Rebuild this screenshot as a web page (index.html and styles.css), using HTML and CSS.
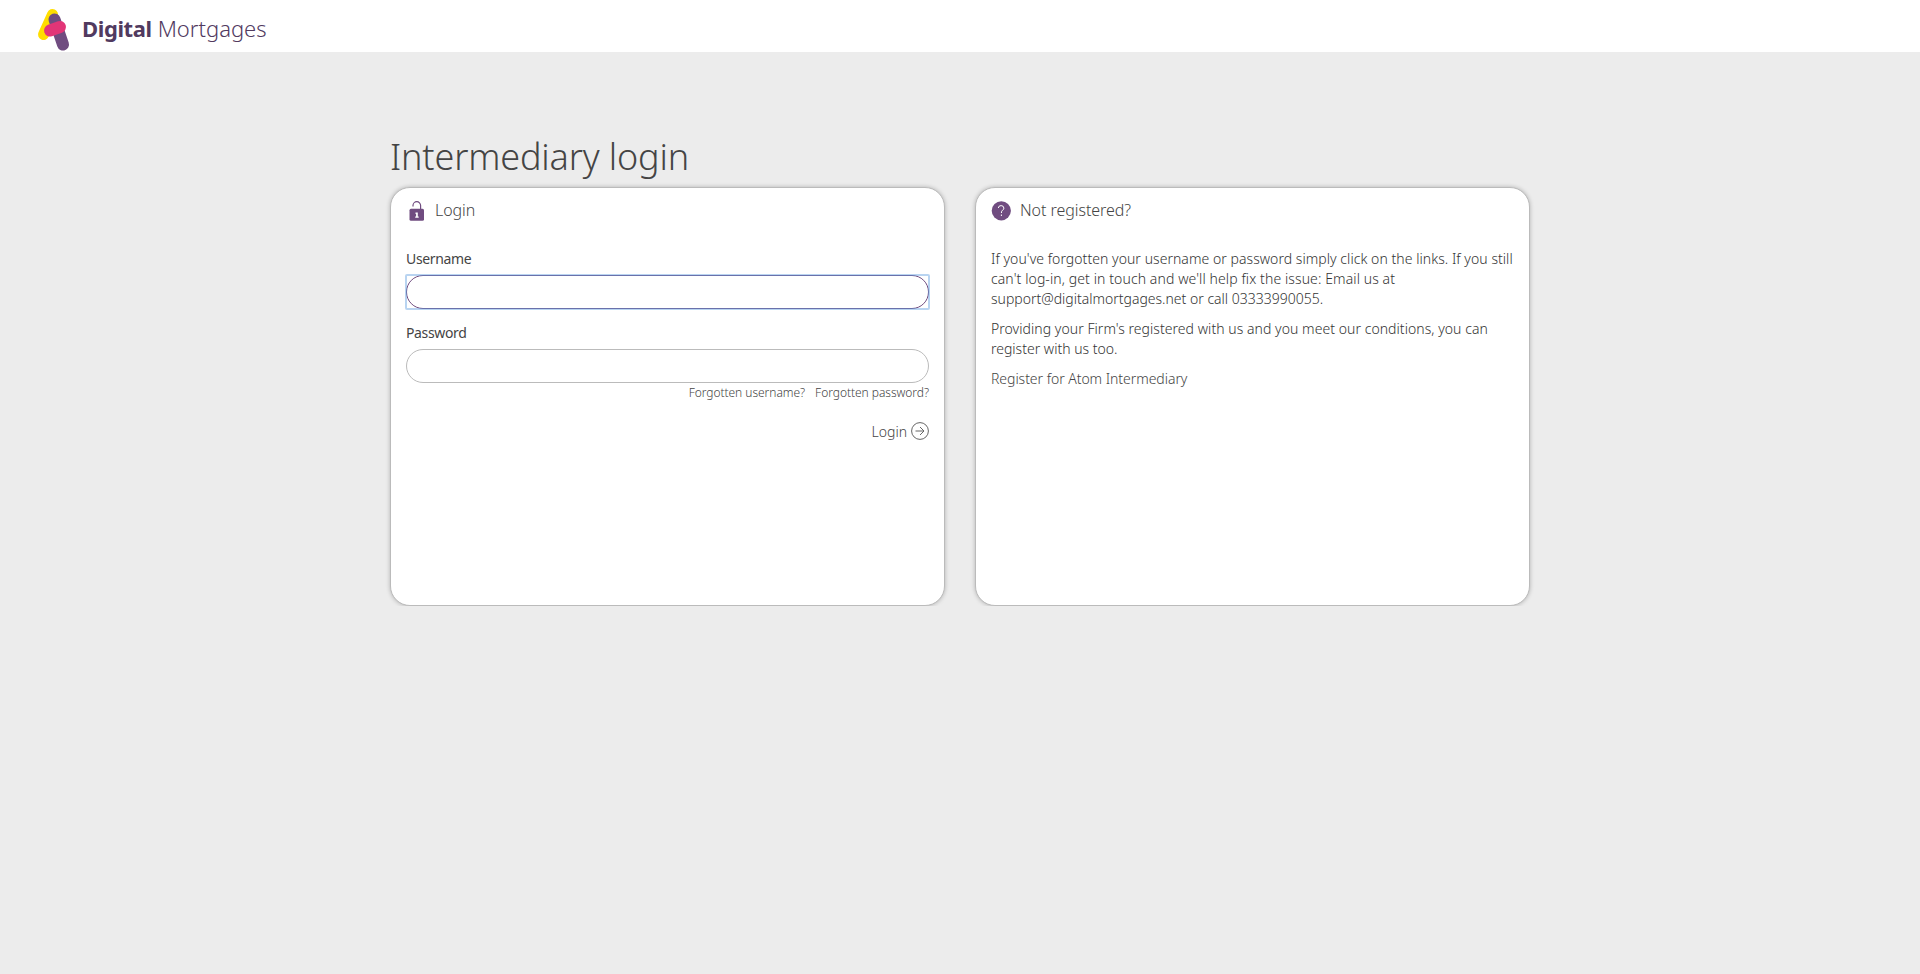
FILE: index.html
```html
<!DOCTYPE html>
<html lang="en">
<head>
<meta charset="utf-8">
<title>Intermediary login</title>
<link rel="stylesheet" href="styles.css">
</head>
<body>
<header class="topbar">
  <a class="brand">
    <svg class="brand-mark" viewBox="0 0 40 50" width="40" height="50"><g fill="none" stroke-linecap="round"><path d="M18.500 10.500L9.500 30.500" stroke="#ffde00" stroke-width="11"/><path d="M20.500 15.500L29 40.500" stroke="#704c80" stroke-width="12"/><path d="M16 26.500L26 23" stroke="#e23577" stroke-width="12"/></g></svg>
    <span class="brand-name"><b>Digital</b> <span>Mortgages</span></span>
  </a>
</header>
<main class="page">
  <h1 class="title">Intermediary login</h1>
  <div class="cards">
    <section class="card">
      <h2 class="card-head">
        <svg class="lock" width="16" height="20" viewBox="0 0 16 20"><path d="M4 5.500V4.500A3.800 3.800 0 0 1 11.600 4.500V8" fill="none" stroke="#704c80" stroke-width="1.200"/><rect x=".5" y="7.800" width="14.500" height="12" rx="1.500" fill="#704c80"/><path d="M6.500 11.500h2.300v4h.900v1.300H6.200v-1.300h.9v-2.500h-.600z" fill="#fff"/></svg>
        <span>Login</span>
      </h2>
      <label class="label" for="user">Username</label>
      <div class="focus-ring"><input class="field focused" id="user" type="text"></div>
      <label class="label second" for="pass">Password</label>
      <input class="field" id="pass" type="password">
      <div class="links"><a>Forgotten username?</a><a>Forgotten password?</a></div>
      <div class="submit"><span>Login</span><svg width="18" height="18" viewBox="0 0 18 18" fill="none" stroke="#666"><circle cx="9" cy="9" r="8.400"/><path d="M4.500 9h8.500M9 5l4 4-4 4"/></svg></div>
    </section>
    <section class="card">
      <h2 class="card-head">
        <svg class="help" width="20" height="20" viewBox="0 0 20 20"><circle cx="10.300" cy="9.800" r="9.600" fill="#704c80"/><path d="M7.300 7Q7.500 4.600 10.100 4.600T12.900 7.100Q12.900 8.300 11.600 9.200T10.400 12M10.400 13.500V15" fill="none" stroke="#fff"/></svg>
        <span>Not registered?</span>
      </h2>
      <div class="copy">
        <p><span class="open">If you've forgotten your username or password simply click on the links. If you still</span><br><span class="wide">can't log-in, get in touch and we'll help fix the issue: Email us at</span><br>support@digitalmortgages.net or call 03333990055.</p>
        <p><span class="open">Providing your Firm's registered with us and you meet our conditions, you can</span><br>register with us too.</p>
        <p><a class="register">Register for Atom Intermediary</a></p>
      </div>
    </section>
  </div>
</main>
</body>
</html>
```
FILE: styles.css
```css
* { box-sizing: border-box; }
body { margin: 0; background: #ececec; color: #333; font: 300 14px/20px "Noto Sans", sans-serif; }
.topbar { height: 52px; background: #fff; padding-left: 34px; }
.brand { display: flex; height: 52px; }
.brand-mark { margin-top: 4px; height: 50px; }
.brand-name { display: flex; gap: 6px; margin-left: 8px; font-size: 22px; line-height: 56px; color: #513a5f; }
.brand-name b { font-weight: 700; letter-spacing: -0.4px; }
.page { width: 1140px; margin: 0 auto; padding-top: 85px; }
.title { margin: 0 0 10px; color: #444; font-weight: 300; font-size: 36px; line-height: 40px; letter-spacing: -0.15px; }
.cards { display: flex; gap: 30px; }
.card { width: 555px; height: 419px; padding: 15px; background: #fff; border: 1px solid #bbb; border-radius: 20px; box-shadow: 0 0 4px rgba(0, 0, 0, 0.25); }
.card-head { display: flex; margin: -2px 0 28px; height: 20px; font-weight: 300; font-size: 16px; line-height: 18px; color: #444; }
.lock { margin: 0 10px 0 3px; }
.help { margin-right: 9px; }
.card-head span { letter-spacing: -0.05px; }
.label { display: block; font-weight: 400; margin-bottom: 6px; letter-spacing: -0.35px; color: #444; }
.label.second { margin-top: 14px; }
.field { display: block; width: 523px; height: 34px; border: 1px solid #bbb; border-radius: 17px; background: #fff; outline: none; }
.focused { border-color: #704c80; }
.focus-ring { position: relative; }
.focus-ring::after { content: ""; position: absolute; inset: -1px; border: 2px solid rgba(100, 160, 225, 0.45); border-radius: 2px; pointer-events: none; }
.links { display: flex; justify-content: flex-end; gap: 10px; font-size: 12px; letter-spacing: -0.04px; color: #444; }
.submit { display: flex; justify-content: flex-end; gap: 4px; margin-top: 19px; color: #444; }
.copy p { margin: 0 0 10px; }
.open { letter-spacing: 0.05px; }
.wide { letter-spacing: 0.1px; }
.register { color: #444; letter-spacing: -0.04px; }
```
